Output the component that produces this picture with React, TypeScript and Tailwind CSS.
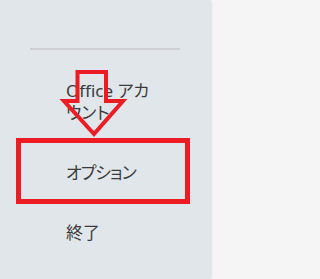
import React from 'react';

const NavItem: React.FC<{ label: string; className?: string }> = ({ label, className }) => (
  <div className={`pl-[66px] pr-4 ${className ?? ''}`}>
    <div className="w-[92px] text-[17px] leading-[22px] text-[#3b3b3b]">{label}</div>
  </div>
);

export default function App() {
  return (
    <div
      className="relative flex h-[279px] w-full overflow-hidden bg-[#f5f5f5] [font-family:'Noto_Sans','Noto_Sans_CJK_JP',sans-serif] [font-feature-settings:'palt']"
    >
      <aside className="flex h-full w-[210px] shrink-0 flex-col bg-[#e1e6eb] shadow-[1px_0_3px_rgba(0,0,0,0.12)]">
        <div className="mx-[30px] mt-[48px] h-[2px] bg-[#cdcfd2]" />
        <NavItem label="Office アカウント" className="mt-[30px]" />
        <NavItem label="オプション" className="mt-[38px] tracking-[-1px]" />
        <NavItem label="終了" className="mt-[38px]" />
      </aside>

      {/* annotation: red box and arrow */}
      <div className="pointer-events-none absolute left-[16px] top-[138px] h-[66px] w-[174px] border-[5px] border-[#ed1c24]" />
      <svg
        className="pointer-events-none absolute left-0 top-0"
        width="240"
        height="279"
        viewBox="0 0 240 279"
      >
        <polygon
          points="77.5,72 106,72 106,101 123,101 94,134 64,101 77.5,101"
          fill="none"
          stroke="#ed1c24"
          strokeWidth="4"
          strokeLinejoin="miter"
        />
      </svg>
    </div>
  );
}
